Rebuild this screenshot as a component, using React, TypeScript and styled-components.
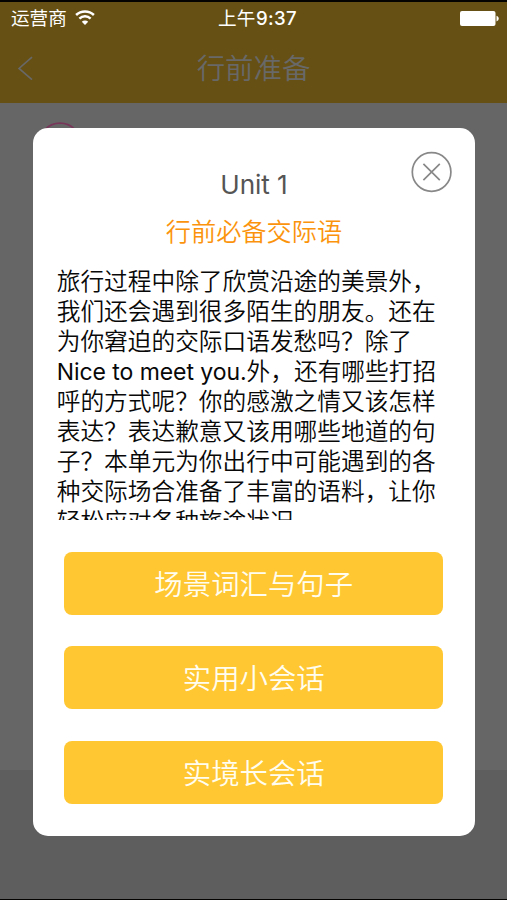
import React from "react";
import styled, { createGlobalStyle } from "styled-components";

const GlobalStyle = createGlobalStyle`
  * { box-sizing: border-box; }
  body {
    margin: 0;
    background: #000;
    font-family: Inter, "Noto Sans CJK SC", sans-serif;
  }
`;

const Screen = styled.div`
  display: grid;
  width: 507px;
  height: 900px;
  overflow: hidden;
  padding: 2px 0 1px;
  background: #050302;
`;

const Layer = styled.div`
  grid-area: 1 / 1;
  display: flex;
  flex-direction: column;
  min-width: 0;
  min-height: 0;
`;

const Header = styled.header`
  height: 101px;
  flex: none;
  background: #665014;
`;

const StatusBar = styled.div`
  display: grid;
  grid-template-columns: 1fr auto 1fr;
  align-items: center;
  height: 33px;
  padding: 0 8px 0 11px;
  color: #fff;
  font-size: 18.6px;
  line-height: 33px;
`;

const Carrier = styled.div`
  display: flex;
  align-items: center;
  gap: 8px;
`;

const Clock = styled.div`
  padding-left: 5px;
  font-weight: 500;
  letter-spacing: 0.4px;
`;

const ClockPrefix = styled.span`
  font-weight: 400;
`;

const Battery = styled.svg`
  justify-self: end;
`;

const NavBar = styled.div`
  display: grid;
  grid-template-columns: 80px 1fr 80px;
  align-items: center;
  height: 68px;
  color: #686868;
`;

const BackIcon = styled.svg`
  margin-left: 17px;
`;

const NavTitle = styled.h1`
  margin: 0;
  text-align: center;
  font-size: 28.4px;
  font-weight: 350;
  line-height: 68px;
`;

const Content = styled.main`
  height: 667px;
  flex: none;
  padding: 19px 0 0 38px;
  background: #666666;
`;

const Footer = styled.div`
  flex: 1;
  background: #5e5e5e;
`;

const Dialog = styled.section`
  position: relative;
  display: flex;
  flex-direction: column;
  width: 442.5px;
  height: 708px;
  margin: 126px 0 0 32.7px;
  padding: 37px 32px 0 24px;
  border-radius: 15px;
  background: #fff;
`;

const CloseButton = styled.button`
  position: absolute;
  top: 23px;
  right: 22.5px;
  display: flex;
  padding: 0;
  border: 0;
  background: none;
`;

const UnitTitle = styled.h2`
  margin: 0 -8px 0 0;
  text-align: center;
  color: #555;
  font-size: 26.2px;
  font-weight: 400;
  line-height: 40px;
  letter-spacing: -0.1px;
`;

const Subtitle = styled.h3`
  margin: 7px -8px 0 0;
  text-align: center;
  color: #fb940c;
  font-size: 25.2px;
  font-weight: 350;
  line-height: 40px;
`;

const Description = styled.div`
  height: 253px;
  margin-top: 15px;
  overflow: hidden;
  color: #080808;
  font-size: 23.7px;
  font-weight: 350;
  line-height: 30px;
  white-space: nowrap;
`;

const Line = styled.div`
  height: 30px;
`;

const Latin = styled.span`
  font-size: 23px;
  font-weight: 400;
  letter-spacing: -0.06px;
`;

const Actions = styled.div`
  display: flex;
  flex-direction: column;
  gap: 31.5px;
  margin: 31.5px 0 0 7.3px;
`;

const Action = styled.button`
  width: 379.5px;
  height: 63.2px;
  padding: 2px 0 0;
  border: 0;
  border-radius: 8px;
  background: #ffc732;
  color: #fffdf0;
  font-family: inherit;
  font-size: 28.4px;
  font-weight: 350;
  line-height: 61px;
`;

const lines: React.ReactNode[] = [
  "旅行过程中除了欣赏沿途的美景外，",
  "我们还会遇到很多陌生的朋友。还在",
  "为你窘迫的交际口语发愁吗？除了",
  <><Latin>Nice to meet you.</Latin>外，还有哪些打招</>,
  "呼的方式呢？你的感激之情又该怎样",
  "表达？表达歉意又该用哪些地道的句",
  "子？本单元为你出行中可能遇到的各",
  "种交际场合准备了丰富的语料，让你",
  "轻松应对各种旅途状况。",
];

const actions = ["场景词汇与句子", "实用小会话", "实境长会话"];

export default function App() {
  return (
    <>
      <GlobalStyle />
      <Screen lang="zh-CN">
        <Layer>
          <Header>
            <StatusBar>
              <Carrier>
                运营商
                <svg width="20" height="17" viewBox="0 0 20 17" fill="none" stroke="#fff" strokeWidth="2.5">
                  <path d="M1.1 5a12.8 12.8 0 0 1 17.8 0" />
                  <path d="M4.4 8.6a8.1 8.1 0 0 1 11.2 0" />
                  <path d="M10 15 6.8 11.8a4.6 4.6 0 0 1 6.4 0Z" fill="#fff" stroke="none" />
                </svg>
              </Carrier>
              <Clock><ClockPrefix>上午</ClockPrefix>9:37</Clock>
              <Battery width="39" height="16" viewBox="0 0 39 16" fill="#fff">
                <rect x="0" y="0" width="35.5" height="15" rx="2" />
                <path d="M36.5 4.8c3 1 3 4.6 0 5.6Z" />
              </Battery>
            </StatusBar>
            <NavBar>
              <BackIcon width="17" height="26" viewBox="0 0 17 26" fill="none" stroke="currentColor" strokeWidth="1.6">
                <path d="M15 1.2 2 12.4l13 11.2" />
              </BackIcon>
              <NavTitle>行前准备</NavTitle>
            </NavBar>
          </Header>
          <Content>
            <svg width="44" height="44" viewBox="0 0 44 44" fill="none" stroke="#78375a" strokeWidth="1.7">
              <circle cx="22" cy="22" r="20.8" />
            </svg>
          </Content>
          <Footer />
        </Layer>
        <Layer>
          <Dialog>
            <CloseButton aria-label="关闭">
              <svg width="42" height="42" viewBox="0 0 42 42" fill="none" stroke="#888" strokeWidth="1.7">
                <circle cx="20.6" cy="21" r="19.3" />
                <path d="m12.4 12.8 16.4 16.4M28.8 12.8 12.4 29.2" />
              </svg>
            </CloseButton>
            <UnitTitle>Unit 1</UnitTitle>
            <Subtitle>行前必备交际语</Subtitle>
            <Description>
              {lines.map((line, i) => (
                <Line key={i}>{line}</Line>
              ))}
            </Description>
            <Actions>
              {actions.map((label) => (
                <Action key={label}>{label}</Action>
              ))}
            </Actions>
          </Dialog>
        </Layer>
      </Screen>
    </>
  );
}
